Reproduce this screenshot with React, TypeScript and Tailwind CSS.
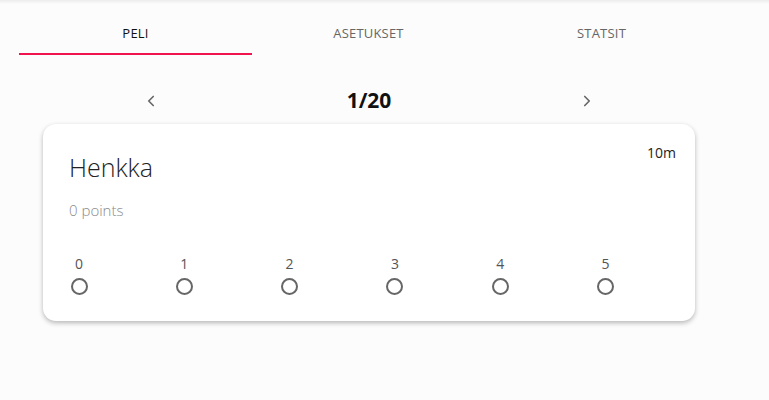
import { ChevronLeft, ChevronRight } from "lucide-react";

const tabs = ["PELI", "ASETUKSET", "STATSIT"];
const scores = [0, 1, 2, 3, 4, 5];

export default function App() {
  return (
    <div
      className="min-h-[400px] w-full bg-[#fcfcfc] relative"
      style={{ fontFamily: '"Open Sans", "Noto Sans", sans-serif' }}
    >
      <div className="h-[4px] w-full bg-gradient-to-b from-[#ececec] to-[#fcfcfc]" />
      <div className="flex pl-[19px] pt-[10px]">
        {tabs.map((t, i) => (
          <div
            key={t}
            className={
              "w-[233px] h-[41px] flex items-center justify-center text-[13px] tracking-[0.2px] border-b-2 " +
              (i === 0 ? "text-[#111] border-[#f0134d]" : "text-[#666] border-transparent")
            }
          >
            {t}
          </div>
        ))}
      </div>

      <div className="flex items-center w-[454px] ml-[142px] mt-[35px] justify-between">
        <ChevronLeft className="w-[18px] h-[18px] text-[#666]" strokeWidth={2.2} />
        <div className="text-[21px] font-bold text-[#111] leading-none">1/20</div>
        <ChevronRight className="w-[18px] h-[18px] text-[#666]" strokeWidth={2.2} />
      </div>

      <div className="ml-[43px] mt-[13px] w-[652px] h-[197px] bg-white rounded-[13px] shadow-[0_2px_5px_rgba(0,0,0,0.28)] relative px-[26px] pt-[26px]">
        <div className="absolute right-[19px] top-[18px] text-[14px] text-[#222]">10m</div>
        <div className="text-[25px] font-light text-[#222] leading-[34px]">Henkka</div>
        <div className="mt-[15px] text-[15px] text-[#8a8a8a] font-light">0 points</div>
        <div className="flex mt-[33px]">
          {scores.map((s) => (
            <div key={s} className="w-[105.3px] shrink-0">
              <div className="w-[20px] flex flex-col items-center">
                <span className="text-[14px] text-[#555] leading-[18px]">{s}</span>
                <span className="mt-[5px] w-[17px] h-[17px] rounded-full border-2 border-[#666]" />
              </div>
            </div>
          ))}
        </div>
      </div>
    </div>
  );
}
